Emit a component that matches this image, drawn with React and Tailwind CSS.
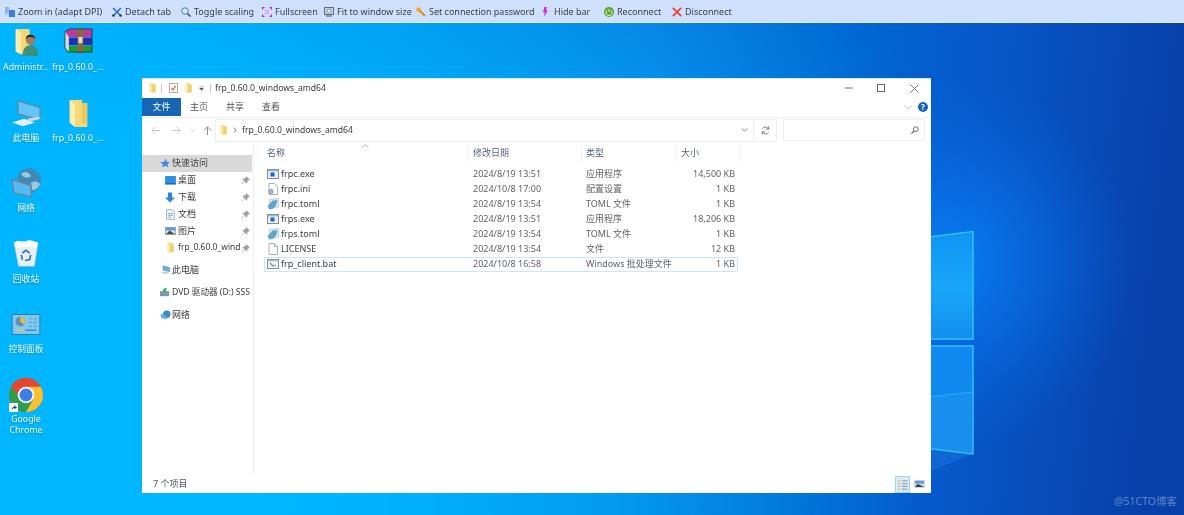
import React from "react";

const F = "[font-family:'Noto_Sans','Noto_Sans_CJK_SC',sans-serif]";

const Folder = ({ className = "w-[12px] h-[14px]" }) => (
  <svg viewBox="0 0 24 28" preserveAspectRatio="none" className={className}>
    <path d="M2 1 L16 1 L16 4 L22 4 L22 27 L8 27 L2 23 Z" fill="#f6d878" />
    <path d="M2 1 L8 5 L8 27 L2 23 Z" fill="#fdeeb0" />
    <path d="M16 4 L22 4 L22 24 L16 24 Z" fill="#f0c860" />
  </svg>
);

const Exe = () => (
  <svg viewBox="0 0 12 12" className="w-[12px] h-[12px]">
    <rect x="0.5" y="1.5" width="11" height="9" fill="#eef2f7" stroke="#7f8ea3" />
    <rect x="1" y="2" width="10" height="1.4" fill="#9fb5d0" />
    <rect x="3.5" y="4.5" width="4" height="4" fill="#1769d6" />
  </svg>
);
const Ini = () => (
  <svg viewBox="0 0 12 12" className="w-[12px] h-[12px]">
    <path d="M2 .5h5.5L10.500 3.500V11.500H2Z" fill="#fff" stroke="#a9b0b8" />
    <circle cx="4" cy="8.500" r="2.300" fill="#aeb7c0" stroke="#7d8791" strokeWidth=".6" />
  </svg>
);
const Toml = () => (
  <svg viewBox="0 0 12 12" className="w-[12px] h-[12px]">
    <path d="M2.500 1.500 L11.500 .5 L11.500 9 L2.500 10 Z" fill="#eaf1f7" stroke="#9fb0be" strokeWidth=".6" />
    <path d="M.5 8 C3 6 4 4 5.500 2.500 L10.500 2 C10 6 8.500 9 6.500 10.500 L2.500 11.500 Z" fill="#5fa5c9" />
  </svg>
);
const Blank = () => (
  <svg viewBox="0 0 12 12" className="w-[12px] h-[12px]">
    <path d="M2 .5h5.500L10.500 3.500V11.500H2Z" fill="#fff" stroke="#a9b0b8" />
    <path d="M7.500 .5V3.500H10.500" fill="#eef0f2" stroke="#a9b0b8" />
  </svg>
);
const Bat = () => (
  <svg viewBox="0 0 12 12" className="w-[12px] h-[12px]">
    <rect x=".5" y="1.500" width="11" height="9" fill="#f2f3f4" stroke="#8a939c" />
    <rect x="1" y="2" width="10" height="1.300" fill="#b4bcc4" />
    <path d="M3 5l3 3 3-1" fill="none" stroke="#8a939c" strokeWidth="1.300" />
  </svg>
);
const Pin = () => (
  <svg viewBox="0 0 10 10" className="w-[9px] h-[9px]">
    <path d="M6 .8 9.200 4 8 4.500 6.500 6.500 6.300 8 2 3.700 3.500 3.500 5.500 2ZM3.500 6.500 1 9" fill="#9aa0a6" stroke="#8a9097" strokeWidth=".7" />
  </svg>
);

const ToolItem = ({ icon, label, className = "", narrow = false }) => (
  <div className={`flex items-center gap-[3px] ${className}`}>
    {narrow ? (
      <svg viewBox="0 0 8 10" className="w-[8px] h-[10px] shrink-0">{icon}</svg>
    ) : (
      <svg viewBox="0 0 10 10" className="w-[10px] h-[10px] shrink-0">{icon}</svg>
    )}
    <span className="whitespace-nowrap">{label}</span>
  </div>
);

const Toolbar = () => (
  <div className={`h-[23px] shrink-0 bg-[#cee0fb] border-b border-[#e4eefc] flex items-center pl-[5px] pt-[2px] text-[9px] text-[#3a3f47] ${F}`}>
    <ToolItem className="w-[107px]" label="Zoom in (adapt DPI)" icon={<>
      <rect x="0" y="0" width="4" height="8" fill="#8fb4e6" />
      <rect x="4" y="3" width="6" height="7" fill="#3f7fd4" />
      <rect x="1" y="6" width="3" height="4" fill="#c4d6ee" />
    </>} />
    <ToolItem className="w-[69px]" label="Detach tab" icon={<>
      <path d="M1 1 L9 9" stroke="#1c6fd0" strokeWidth="1.500" />
      <path d="M9 1 L1 9" stroke="#1c6fd0" strokeWidth="1.500" />
      <circle cx="1.500" cy="8.500" r="1.300" fill="#2c3e50" />
      <circle cx="8.500" cy="8.500" r="1.300" fill="#2c3e50" />
    </>} />
    <ToolItem className="w-[81px]" label="Toggle scaling" icon={<>
      <circle cx="4" cy="4" r="3.200" fill="#d9e8f7" stroke="#4f7fa8" />
      <path d="M6.500 6.500 L9.500 9.500" stroke="#39485a" strokeWidth="1.500" />
    </>} />
    <ToolItem className="w-[62px]" label="Fullscreen" icon={<>
      <path d="M0 0h3L0 3ZM10 0v3L7 0ZM0 10V7l3 3ZM10 10H7l3-3Z" fill="#c228c8" />
      <path d="M3 3l1.500 1.500M7 3 5.500 4.500M3 7l1.500-1.500M7 7 5.500 5.500" stroke="#d66bd9" />
    </>} />
    <ToolItem className="w-[92px]" label="Fit to window size" icon={<>
      <rect x=".5" y=".5" width="9" height="7" fill="#b9d3ea" stroke="#5b7083" />
      <circle cx="5" cy="4" r="2" fill="#e9f2fa" stroke="#5b7083" strokeWidth=".6" />
      <rect x="2" y="8" width="6" height="2" fill="#8f9ba6" />
    </>} />
    <ToolItem className="w-[127px]" label="Set connection password" icon={<>
      <circle cx="2.500" cy="2.500" r="2.300" fill="#f3a92c" />
      <path d="M3.500 3.500 L9 9" stroke="#e08c18" strokeWidth="2" />
    </>} />
    <ToolItem narrow className="w-[61px]" label="Hide bar" icon={<path d="M1.500 0 L4 0 L2.800 3.500 L4.800 3.500 L.8 10 L1.800 5.300 L0 5.300 Z" fill="#d21fe0" />} />
    <ToolItem className="w-[68px]" label="Reconnect" icon={<>
      <circle cx="5" cy="5" r="5" fill="#5aa72c" />
      <path d="M5 2v3M3 3.300a3 3 0 1 0 4 0" fill="none" stroke="#e7f5da" strokeWidth="1" />
    </>} />
    <ToolItem label="Disconnect" icon={<>
      <path d="M.8 .8 L9.200 9.200M9.200 .8 L.8 9.200" stroke="#e8423a" strokeWidth="1.800" />
    </>} />
  </div>
);

const Wallpaper = () => (
  <svg className="absolute inset-0 w-full h-full" viewBox="0 0 1184 492" preserveAspectRatio="none">
    <defs>
      <linearGradient id="base" x1="0" y1="0" x2="1184" y2="120" gradientUnits="userSpaceOnUse">
        <stop offset="0" stopColor="#00b5ff" />
        <stop offset="0.3" stopColor="#00a2f2" />
        <stop offset="0.55" stopColor="#0783e2" />
        <stop offset="0.72" stopColor="#0166d2" />
        <stop offset="0.82" stopColor="#0759cb" />
        <stop offset="1" stopColor="#0740a8" />
      </linearGradient>
      <linearGradient id="left" x1="0" y1="0" x2="0" y2="1">
        <stop offset="0" stopColor="#00b5ff" stopOpacity="0.25" />
        <stop offset="0.25" stopColor="#00b5ff" stopOpacity="1" />
        <stop offset="1" stopColor="#00b7ff" stopOpacity="1" />
      </linearGradient>
      <linearGradient id="fade" x1="0" y1="0" x2="1" y2="0">
        <stop offset="0" stopColor="#fff" />
        <stop offset="0.2" stopColor="#fff" />
        <stop offset="0.78" stopColor="#000" />
      </linearGradient>
      <mask id="lm"><rect width="1184" height="492" fill="url(#fade)" /></mask>
      <radialGradient id="glow" cx="945" cy="240" r="190" gradientUnits="userSpaceOnUse">
        <stop offset="0" stopColor="#0a80f5" stopOpacity="0.95" />
        <stop offset="0.5" stopColor="#0870ea" stopOpacity="0.55" />
        <stop offset="1" stopColor="#0660d8" stopOpacity="0" />
      </radialGradient>
      <linearGradient id="pane1" x1="0" y1="0" x2="0" y2="1">
        <stop offset="0" stopColor="#1094f5" />
        <stop offset="0.55" stopColor="#18a6f8" />
        <stop offset="1" stopColor="#128eef" />
      </linearGradient>
      <linearGradient id="pane2" x1="0" y1="0" x2="0" y2="1">
        <stop offset="0" stopColor="#0e8af2" />
        <stop offset="1" stopColor="#1387ea" />
      </linearGradient>
    </defs>
    <rect width="1184" height="492" fill="url(#base)" />
    <rect width="1184" height="492" fill="url(#left)" mask="url(#lm)" />
    <rect width="1184" height="492" fill="url(#glow)" />
    <path d="M380 56 L480 70 L380 70 Z" fill="#2aa8f0" opacity="0.45" />
    <path d="M920 415 L973 431 L931 448 Z" fill="#2a93ee" opacity="0.25" />
    <path d="M925 214.500 L973 208.500 V316 H925 Z" fill="url(#pane1)" stroke="#30c4f5" strokeWidth="1.500" />
    <path d="M925 323 H973 V431 L925 425 Z" fill="url(#pane2)" stroke="#30c4f5" strokeWidth="1.500" />
    <path d="M925 375 L973 369.500 V431 L925 425 Z" fill="#2a9cf2" opacity="0.3" />
    <path d="M925 374.500 L973 369" stroke="#2cbdf5" strokeWidth="0.800" />
  </svg>
);

const DeskIcon = ({ pos, label, children, mt }) => (
  <div className={`absolute ${pos} w-[52px] flex flex-col items-center text-white/95 text-[8.800px] leading-[11px] text-center ${F} [text-shadow:0_1px_2px_rgba(0,60,120,0.4)]`}>
    {children}
    <span className={`${mt} whitespace-nowrap`}>{label}</span>
  </div>
);

const Desktop = () => (
  <>
    <DeskIcon pos="left-0 top-[5px]" mt="mt-[5px]" label="Administr...">
      <svg viewBox="0 0 30 32" preserveAspectRatio="none" className="w-[26px] h-[29px] ml-[2px]">
        <path d="M2 1 L18 1 L18 28 L8 29 L2 26 Z" fill="#f6d878" />
        <path d="M2 1 L8 5 V29 L2 26 Z" fill="#fdeeb0" />
        <path d="M10 31 C10 22 14 19 19 19 C24 19 28 22 28 31 Z" fill="#3f8e79" />
        <circle cx="19" cy="13" r="5.500" fill="#a57a5c" />
        <path d="M13.500 12 C14 6 24 6 24.500 12 C21 9 17 9 13.500 12 Z" fill="#2c211c" />
      </svg>
    </DeskIcon>
    <DeskIcon pos="left-[52px] top-[5px]" mt="mt-[9px]" label="frp_0.60.0_...">
      <svg viewBox="0 0 30 28" preserveAspectRatio="none" className="w-[29px] h-[25px]">
        <path d="M1 4 L6 1 L29 1 L29 10 L5 10 Z" fill="#c0379a" />
        <path d="M2 11 L29 11 L29 19 L3 19 Z" fill="#1f2fb8" />
        <path d="M2 20 L29 20 L29 27 L4 27 Z" fill="#1d9a33" />
        <path d="M1 4 L5 10 V27 L1 22 Z" fill="#d8dde0" />
        <path d="M14 1 H20 V28 H14Z" fill="#8a6a3a" />
        <rect x="15" y="10" width="4" height="7" fill="#e0e0d0" />
        <path d="M1 4 L6 1 H29 V27 H4 L1 22Z" fill="none" stroke="#1c2a30" strokeWidth=".8" />
      </svg>
    </DeskIcon>
    <DeskIcon pos="left-0 top-[77px]" mt="mt-[5px]" label="此电脑">
      <svg viewBox="0 0 30 30" preserveAspectRatio="none" className="w-[30px] h-[28px]">
        <path d="M7 1 L29 8 V21 L7 15 Z" fill="#64c4f5" stroke="#6b8295" strokeWidth="1.200" />
        <path d="M1 24 L13 20 L24 24 L12 28 Z" fill="#e8ecef" />
        <path d="M16 20 L27 18 L30 20 L19 23Z" fill="#cdd6dc" />
      </svg>
    </DeskIcon>
    <DeskIcon pos="left-[52px] top-[76px]" mt="mt-[5px]" label="frp_0.60.0_...">
      <Folder className="w-[21px] h-[29px]" />
    </DeskIcon>
    <DeskIcon pos="left-0 top-[145px]" mt="mt-[4px]" label="网络">
      <svg viewBox="0 0 30 30" preserveAspectRatio="none" className="w-[30px] h-[31px]">
        <circle cx="18" cy="12" r="12" fill="#3f8bb8" />
        <path d="M10 6 C14 2 18 4 20 8 C17 10 13 10 10 6 ZM20 14 C24 12 28 13 29 16 C26 21 23 22 21 21Z" fill="#9cc7dc" />
        <path d="M1 11 L20 17 V28 L3 24 Z" fill="#57b9f0" stroke="#6b8295" strokeWidth="1.200" />
      </svg>
    </DeskIcon>
    <DeskIcon pos="left-0 top-[217px]" mt="mt-[6px]" label="回收站">
      <svg viewBox="0 0 28 30" preserveAspectRatio="none" className="w-[26px] h-[28px]">
        <path d="M1 3 L27 3 L23 28 L6 28 Z" fill="#e8eef2" stroke="#b9c6cf" strokeWidth=".7" />
        <path d="M1 3 C6 -1 10 3 14 1 C19 -1 23 2 27 3 L25 9 C18 6 9 9 3 8 Z" fill="#fbfcfd" />
        <path d="M10 14 L14 11 L18 14 M19 16 L18 21 L13 22 M10 21 L9 16" fill="none" stroke="#2473bb" strokeWidth="1.800" />
      </svg>
    </DeskIcon>
    <DeskIcon pos="left-0 top-[291px]" mt="mt-[9px]" label="控制面板">
      <svg viewBox="0 0 30 22" className="w-[30px] h-[21px]">
        <rect x=".5" y=".5" width="29" height="21" fill="#7cc9f3" stroke="#37799f" />
        <circle cx="9" cy="8" r="5" fill="#5d8fb3" />
        <path d="M9 8 V3 A5 5 0 0 1 13 11 Z" fill="#f4b63c" />
        <path d="M4 17 H14" stroke="#f2c24d" strokeWidth="1.400" />
        <path d="M14 17 H26" stroke="#2f88cf" strokeWidth="1.400" />
        <path d="M18 5h3M23 5h3M18 9h3M23 9h3M18 13h3M23 13h3" stroke="#5c9fcb" strokeWidth="1.200" />
      </svg>
    </DeskIcon>
    <DeskIcon pos="left-0 top-[355px]" mt="mt-[2px]" label={<>Google<br />Chrome</>}>
      <div className="relative w-[34px] h-[34px]">
        <svg viewBox="0 0 34 34" className="w-[34px] h-[34px]">
          <circle cx="17" cy="17" r="17" fill="#e8442f" />
          <path d="M17 34 A17 17 0 0 0 31.700 8.500 L17 8.500 Z" fill="#fbc02d" />
          <path d="M2.300 8.500 A17 17 0 0 0 17 34 L24.500 21 L9 17 Z" fill="#2e9e4e" />
          <path d="M2.300 8.500 A17 17 0 0 1 31.700 8.500 L17 8.500 L9.500 17Z" fill="#e8442f" />
          <circle cx="17" cy="17" r="8.300" fill="#fff" />
          <circle cx="17" cy="17" r="6.500" fill="#3d7fe6" />
        </svg>
        <div className="absolute left-[0px] bottom-[0px] w-[9px] h-[9px] bg-white flex items-center justify-center">
          <svg viewBox="0 0 8 8" className="w-[7px] h-[7px]"><path d="M2 7 C2 4 3 3 5 3 V1 L8 4 L5 6 V4.500 C4 4.500 3 5 2 7Z" fill="#1d4f8a" /></svg>
        </div>
      </div>
    </DeskIcon>
  </>
);

const SideRow = ({ icon, label, pin, top = false, className = "h-[17px]", labelClass = "" }) => (
  <div className={`flex items-center ${top ? "pl-[17px]" : "pl-[22px]"} ${className} relative whitespace-nowrap overflow-hidden`}>
    <span className={`w-[12px] h-[12px] flex items-center justify-center shrink-0 ${top ? "mr-[1px]" : "mr-[2px]"}`}>{icon}</span>
    <span className={labelClass}>{label}</span>
    {pin && <span className="absolute right-[2px] top-[4px]"><Pin /></span>}
  </div>
);

const Sidebar = () => (
  <div className="w-[112px] shrink-0 border-r border-[#f0f0f0] pt-[12px] text-[9px] text-[#3c3c3c] pr-[1px]">
    <SideRow top className="h-[17px] bg-[#d9d9d9]" label="快速访问" icon={
      <svg viewBox="0 0 12 12" className="w-[10px] h-[10px]"><path d="M7 .5 8.300 4.500 12 4.800 9 7.300 10 11.500 6.500 9.200 2.500 11.500 3.500 7.500 0 5 4.800 4.700Z" fill="#3b8fd9" /></svg>
    } />
    <SideRow pin label="桌面" icon={<svg viewBox="0 0 12 10" className="w-[11px] h-[9px]"><rect width="12" height="9" rx=".8" fill="#2e8fe0" /><rect y="8" width="12" height="1.500" fill="#1668b8" /></svg>} />
    <SideRow pin label="下载" icon={<svg viewBox="0 0 12 12" className="w-[10px] h-[11px]"><path d="M3.500 0h5v6H12L6 12 0 6h3.500Z" fill="#2e86d8" /></svg>} />
    <SideRow pin label="文档" icon={<svg viewBox="0 0 10 12" className="w-[9px] h-[11px]"><path d="M.5.5h6L9.500 3.500v8H.5Z" fill="#f3f5f6" stroke="#a7afb6" /><path d="M2 5h6M2 7h6M2 9h4" stroke="#79b0dc" /></svg>} />
    <SideRow pin label="图片" icon={<svg viewBox="0 0 12 9" className="w-[11px] h-[8px]"><rect x=".5" y=".5" width="11" height="8" fill="#e8eef3" stroke="#8a98a5" /><rect x="1" y="1" width="10" height="3" fill="#5b9ad8" /><path d="M1 8 L5 4 L11 8Z" fill="#3e5948" /></svg>} />
    <SideRow pin className="h-[16px]" labelClass="text-[8.500px]" label="frp_0.60.0_wind" icon={<Folder className="w-[7px] h-[11px]" />} />
    <SideRow top className="h-[17px] mt-[6px]" label="此电脑" icon={<svg viewBox="0 0 12 12" className="w-[11px] h-[10px]"><path d="M3 1 L11 3 V8 L3 6Z" fill="#5fb6ea" stroke="#6b8295" strokeWidth=".6" /><path d="M0 9 L6 7.500 L11 9.500 L5 11Z" fill="#c7d4dd" /></svg>} />
    <SideRow top className="h-[17px] mt-[5px]" labelClass="text-[8.600px]" label="DVD 驱动器 (D:) SSS" icon={<svg viewBox="0 0 12 12" className="w-[10px] h-[10px]"><rect y="5" width="11" height="6" fill="#7d96ab" /><path d="M3 6 C3 3 5 1 8 1 L7 6Z" fill="#35b85a" /></svg>} />
    <SideRow top className="h-[17px] mt-[6px]" label="网络" icon={<svg viewBox="0 0 12 12" className="w-[11px] h-[10px]"><circle cx="7.500" cy="5" r="4.500" fill="#3f8bb8" /><path d="M0 4.500 L7 6.500 V11 L1 9.500Z" fill="#57b0e8" /></svg>} />
  </div>
);

const files = [
  ["frpc.exe", <Exe />, "2024/8/19 13:51", "应用程序", "14,500 KB"],
  ["frpc.ini", <Ini />, "2024/10/8 17:00", "配置设置", "1 KB"],
  ["frpc.toml", <Toml />, "2024/8/19 13:54", "TOML 文件", "1 KB"],
  ["frps.exe", <Exe />, "2024/8/19 13:51", "应用程序", "18,206 KB"],
  ["frps.toml", <Toml />, "2024/8/19 13:54", "TOML 文件", "1 KB"],
  ["LICENSE", <Blank />, "2024/8/19 13:54", "文件", "12 KB"],
  ["frp_client.bat", <Bat />, "2024/10/8 16:58", "Windows 批处理文件", "1 KB"],
];

const FileList = () => (
  <div className="flex-1 pl-[10px] pt-[3px] text-[9px] min-w-0">
    <div className="grid grid-cols-[205px_113px_94px_64px] w-[476px] h-[16px] items-center text-[#566578] relative">
      <div className="pl-[3px] h-full border-r border-[#eef0f2] relative">
        名称
        <svg viewBox="0 0 8 4" className="absolute left-[98px] top-[-2px] w-[7px] h-[4px]"><path d="M.5 3.500 4 .5 7.500 3.500" fill="none" stroke="#a8adb3" /></svg>
      </div>
      <div className="pl-[4px] h-full border-r border-[#eef0f2]">修改日期</div>
      <div className="pl-[4px] h-full border-r border-[#eef0f2]">类型</div>
      <div className="pl-[5px] h-full border-r border-[#eef0f2]">大小</div>
    </div>
    <div className="mt-[5px]">
      {files.map(([name, icon, date, type, size], i) => (
        <div key={name} className={`grid grid-cols-[205px_113px_94px_62px] w-[474px] h-[15px] items-center text-[#5f6368] ${i === 6 ? "outline outline-1 -outline-offset-1 outline-[#cbe6f8]" : ""}`}>
          <div className="flex items-center pl-[3px] text-[#3a3f47]">
            <span className="w-[12px] h-[12px] mr-[2px] flex">{icon}</span>
            {name}
          </div>
          <div className="pl-[4px] whitespace-nowrap">{date}</div>
          <div className="pl-[4px] whitespace-nowrap">{type}</div>
          <div className="text-right pr-[3px] whitespace-nowrap">{size}</div>
        </div>
      ))}
    </div>
  </div>
);

const Window = () => (
  <div className={`absolute left-[142px] top-[54.500px] w-[789px] h-[415.500px] bg-white flex flex-col ${F} text-[9px] border-t border-[#d6ecfb]`}>
    {/* Title bar */}
    <div className="h-[19px] flex items-center pl-[7px] text-[#3a3a3a] text-[8.600px] shrink-0">
      <Folder className="w-[7px] h-[10px]" />
      <span className="w-px h-[9px] bg-[#c8c8c8] ml-[5px] mr-[7px]" />
      <svg viewBox="0 0 10 11" className="w-[9px] h-[10px] mr-[7px]"><rect x=".5" y=".5" width="9" height="10" fill="#fff" stroke="#a9a9a9" /><path d="M2.500 5.500 4.500 7.500 7.500 3" fill="none" stroke="#d9622b" strokeWidth="1.200" /></svg>
      <Folder className="w-[7px] h-[10px]" />
      <svg viewBox="0 0 6 6" className="w-[5px] h-[6px] ml-[7px] mr-[6px]"><path d="M0 1H6M.5 3H5.500L3 6Z" fill="#555" stroke="#555" strokeWidth=".4" /></svg>
      <span className="w-px h-[9px] bg-[#c8c8c8] mr-[4px]" />
      <span>frp_0.60.0_windows_amd64</span>
      <div className="ml-auto flex items-center pr-[12px] gap-[24px] text-[#666]">
        <svg viewBox="0 0 8 8" className="w-[8px] h-[8px]"><path d="M0 4H8" stroke="#777" /></svg>
        <svg viewBox="0 0 8 8" className="w-[8px] h-[8px] mr-[1px]"><rect x=".5" y=".5" width="7" height="7" fill="none" stroke="#666" /></svg>
        <svg viewBox="0 0 8 8" className="w-[9px] h-[9px]"><path d="M.5.5 7.500 7.500M7.500.5.5 7.500" stroke="#666" strokeWidth=".8" /></svg>
      </div>
    </div>
    {/* Ribbon tabs */}
    <div className="h-[20px] flex items-center shrink-0 text-[#555] border-b border-[#f0f0f0]">
      <div className="w-[39px] h-[18px] self-start bg-[#1666b4] text-white flex items-center justify-center">文件</div>
      <div className="w-[36px] text-center">主页</div>
      <div className="w-[36px] text-center">共享</div>
      <div className="w-[36px] text-center">查看</div>
      <div className="ml-auto flex items-center gap-[5px] pr-[3px]">
        <svg viewBox="0 0 10 6" className="w-[9px] h-[5px]"><path d="M.5.5 5 5 9.500.5" fill="none" stroke="#b9bdc2" /></svg>
        <div className="w-[10px] h-[10px] rounded-full bg-[#1565c0] text-white text-[8px] font-bold leading-[10px] text-center">?</div>
      </div>
    </div>
    {/* Address row */}
    <div className="h-[25px] flex items-center shrink-0 relative">
      <div className="w-[73px] flex items-center pl-[9px] shrink-0">
        <svg viewBox="0 0 10 10" className="w-[9px] h-[9px] mr-[12px]"><path d="M10 5H1M5 1 1 5 5 9" fill="none" stroke="#c0c4c8" /></svg>
        <svg viewBox="0 0 10 10" className="w-[9px] h-[9px] mr-[9px]"><path d="M0 5H9M5 1 9 5 5 9" fill="none" stroke="#c0c4c8" /></svg>
        <svg viewBox="0 0 6 4" className="w-[5px] h-[3px] mr-[8px]"><path d="M.5.5 3 3.500 5.500.5" fill="none" stroke="#c0c4c8" /></svg>
        <svg viewBox="0 0 10 10" className="w-[9px] h-[9px]"><path d="M5 10V1M1 5 5 1 9 5" fill="none" stroke="#7a7f85" /></svg>
      </div>
      <div className="w-[539px] h-[23px] border border-[#efefef] flex items-center pl-[4px] text-[#3a3a3a] text-[8.600px] shrink-0">
        <Folder className="w-[7px] h-[10px]" />
        <svg viewBox="0 0 5 7" className="w-[4px] h-[6px] ml-[6px] mr-[5px]"><path d="M1 .5 4 3.500 1 6.500" fill="none" stroke="#555" /></svg>
        <span>frp_0.60.0_windows_amd64</span>
        <svg viewBox="0 0 8 5" className="ml-auto mr-[5px] w-[7px] h-[4px]"><path d="M.5.5 4 4 7.500.5" fill="none" stroke="#666" /></svg>
      </div>
      <div className="w-[23px] h-[23px] border border-l-0 border-[#efefef] flex items-center justify-center shrink-0">
        <svg viewBox="0 0 10 10" className="w-[9px] h-[9px]"><path d="M8.500 3.500A4 4 0 0 0 1.500 3M1.500 6.500A4 4 0 0 0 8.500 7M8.500 .5V3.500H5.500M1.500 9.500V6.500H4.500" fill="none" stroke="#666" strokeWidth=".9" /></svg>
      </div>
      <div className="ml-[6px] w-[142px] h-[22px] border border-[#efefef] flex items-center justify-end pr-[5px] shrink-0">
        <svg viewBox="0 0 10 10" className="w-[8px] h-[8px]"><circle cx="6" cy="4" r="3" fill="none" stroke="#666" strokeWidth="1.200" /><path d="M4 6 .5 9.500" stroke="#666" strokeWidth="1.500" /></svg>
      </div>
    </div>
    {/* Body */}
    <div className="flex flex-1 min-h-0">
      <Sidebar />
      <FileList />
    </div>
    {/* Status */}
    <div className="h-[18px] flex items-center pl-[11px] shrink-0 text-[#4f5b6b] relative">
      <span>7 个项目</span>
      <div className="ml-auto flex items-center mr-[6px] gap-[4px]">
        <div className="w-[15px] h-[17px] bg-[#d8ecf8] border border-[#9fd3f0] flex items-center justify-center">
          <svg viewBox="0 0 12 12" className="w-[11px] h-[11px]"><path d="M1 2h3M1 5h3M1 8h3M1 11h3" stroke="#e3b49a" strokeWidth="1.400" /><path d="M5.500 2h6M5.500 5h6M5.500 8h6M5.500 11h6" stroke="#9aa5ae" strokeWidth="1.200" /></svg>
        </div>
        <svg viewBox="0 0 12 9" className="w-[11px] h-[8px]"><rect width="12" height="9" fill="#cfd6dc" /><rect x="1" y="1" width="10" height="3" fill="#5b9ae0" /><path d="M1 8 L4 4.500 L11 8Z" fill="#2f4038" /></svg>
      </div>
    </div>
  </div>
);

export default function App() {
  return (
    <div className="w-[1184px] h-[515px] overflow-hidden flex flex-col blur-[0.3px]">
      <Toolbar />
      <div className="relative flex-1">
        <Wallpaper />
        <Desktop />
        <Window />
        <div className={`absolute right-[7px] bottom-[5px] text-[10.500px] text-white/35 ${F}`}>@51CTO博客</div>
      </div>
    </div>
  );
}
